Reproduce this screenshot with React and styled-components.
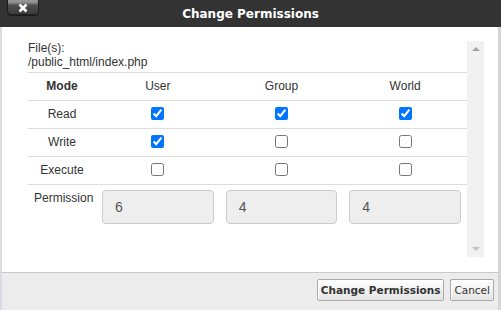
import React from 'react';
import styled, { createGlobalStyle } from 'styled-components';

const GlobalStyle = createGlobalStyle`
    html, body {
        margin: 0;
        padding: 0;
        background: #ececec;
    }
    body {
        font-family: "Liberation Sans", Arial, sans-serif;
        font-size: 12px;
        color: #333;
    }
`

const Dialog = styled.div`
    width: 501px;
    height: 310px;
    display: flex;
    flex-direction: column;
    overflow: hidden;
`

const TitleBar = styled.div`
    height: 27px;
    flex: none;
    background: #333;
    display: flex;
    align-items: center;
    justify-content: center;
    position: relative;
    color: #fff;
    font-family: "DejaVu Sans", Verdana, sans-serif;
    font-weight: bold;
    font-size: 12px;
`

const CloseBtn = styled.div`
    position: absolute;
    left: 7px;
    top: -3px;
    width: 32px;
    height: 18px;
    border: 1px solid #1e1e1e;
    border-radius: 4px;
    background: linear-gradient(#a5a5a5 0%, #8a8a8a 30%, #4e4e4e 45%, #3b3b3b 100%);
    box-shadow: 0 1px 1px rgba(0,0,0,0.5);
    display: flex;
    align-items: center;
    justify-content: center;
    padding-top: 3px;
    box-sizing: border-box;
    svg{ display: block; }
`

const Body = styled.div`
    flex: 1;
    display: flex;
    flex-direction: column;
    background: #fff;
    border-left: 2px solid #d9dde2;
    border-right: 3px solid #d6d6d6;
    border-bottom: 1px solid #c8c8c8;
    padding: 14px 14px 15px 26px;
`

const ScrollArea = styled.div`
    flex: 1;
    display: flex;
    flex-direction: row;
`

const Content = styled.div`
    flex: 1;
    display: flex;
    flex-direction: column;
`

const FileInfo = styled.div`
    line-height: 13.5px;
    padding-top: 1px;
    margin-bottom: 3px;
    color: #333;
`

const Table = styled.table`
    width: 100%;
    border-collapse: collapse;
    table-layout: fixed;
    color: #333;
    line-height: 17px;

    td, th{
        padding: 5px 6px;
        text-align: center;
        vertical-align: middle;
        border-top: 1px solid #ddd;
    }
`

const HeadCell = styled.th`
    font-weight: ${p => p.$bold ? 'bold' : 'normal'};
    width: ${p => p.$w || 'auto'};
`

const TopCell = styled.td`
    && { vertical-align: top; padding-top: 5px; }
`

const Check = styled.input`
    margin: 0;
    width: 13px;
    height: 13px;
    vertical-align: -2px;
`

const PermInput = styled.input`
    box-sizing: border-box;
    width: 100%;
    height: 34px;
    padding: 6px 12px;
    font-family: "Liberation Sans", Arial, sans-serif;
    font-size: 14px;
    color: #555;
    background: #eee;
    border: 1px solid #ccc;
    border-radius: 4px;
    display: block;
    margin: 0 auto;
    opacity: 1;
    -webkit-text-fill-color: #555;
`

const ScrollBar = styled.div`
    width: 17px;
    flex: none;
    background: #f1f1f1;
    display: flex;
    flex-direction: column;
    justify-content: space-between;
    align-items: center;
    padding: 6px 0;
`

const Arrow = styled.div`
    width: 0;
    height: 0;
    border-left: 4px solid transparent;
    border-right: 4px solid transparent;
    ${p => p.$down
        ? 'border-top: 4px solid #c1c1c1;'
        : 'border-bottom: 4px solid #a3a3a3;'}
`

const Footer = styled.div`
    height: 31px;
    flex: none;
    background: #ececec;
    border-left: 2px solid #d9dde2;
    border-right: 3px solid #d6d6d6;
    display: flex;
    justify-content: flex-end;
    align-items: flex-start;
    gap: 6px;
    padding: 6px 4px 0 0;
`

const Button = styled.button`
    height: 22px;
    padding: 0 3px;
    font-family: "DejaVu Sans", Verdana, sans-serif;
    font-size: 10.5px;
    font-weight: ${p => p.$primary ? 'bold' : 'normal'};
    color: #333;
    background: linear-gradient(#ffffff, #e4e4e4);
    border: 1px solid #a9a9a9;
    border-radius: 2px;
    box-shadow: inset 1px 1px 0 #fff;
`

const rows = [
    { label: 'Read', vals: [true, true, true] },
    { label: 'Write', vals: [true, false, false] },
    { label: 'Execute', vals: [false, false, false] },
];

function App(){
    return(
        <Dialog>
            <GlobalStyle />
            <TitleBar>
                <CloseBtn>
                    <svg width="10" height="10" viewBox="0 0 10 10">
                        <path d="M1.5 1.5 L8.5 8.5 M8.5 1.5 L1.5 8.5" stroke="#fff" strokeWidth="2.6" />
                    </svg>
                </CloseBtn>
                Change Permissions
            </TitleBar>
            <Body>
                <ScrollArea>
                    <Content>
                        <FileInfo>
                            File(s):<br />
                            /public_html/index.php
                        </FileInfo>
                        <Table>
                            <thead>
                                <tr>
                                    <HeadCell $bold $w="56px">Mode</HeadCell>
                                    <HeadCell>User</HeadCell>
                                    <HeadCell>Group</HeadCell>
                                    <HeadCell>World</HeadCell>
                                </tr>
                            </thead>
                            <tbody>
                                {rows.map(r => (
                                    <tr key={r.label}>
                                        <td>{r.label}</td>
                                        {r.vals.map((v, i) => (
                                            <td key={i}><Check type="checkbox" defaultChecked={v} /></td>
                                        ))}
                                    </tr>
                                ))}
                                <tr>
                                    <TopCell>Permission</TopCell>
                                    <td><PermInput disabled defaultValue="6" /></td>
                                    <td><PermInput disabled defaultValue="4" /></td>
                                    <td><PermInput disabled defaultValue="4" /></td>
                                </tr>
                            </tbody>
                        </Table>
                    </Content>
                    <ScrollBar>
                        <Arrow />
                        <Arrow $down />
                    </ScrollBar>
                </ScrollArea>
            </Body>
            <Footer>
                <Button $primary>Change Permissions</Button>
                <Button>Cancel</Button>
            </Footer>
        </Dialog>
    );
}

export default App;
